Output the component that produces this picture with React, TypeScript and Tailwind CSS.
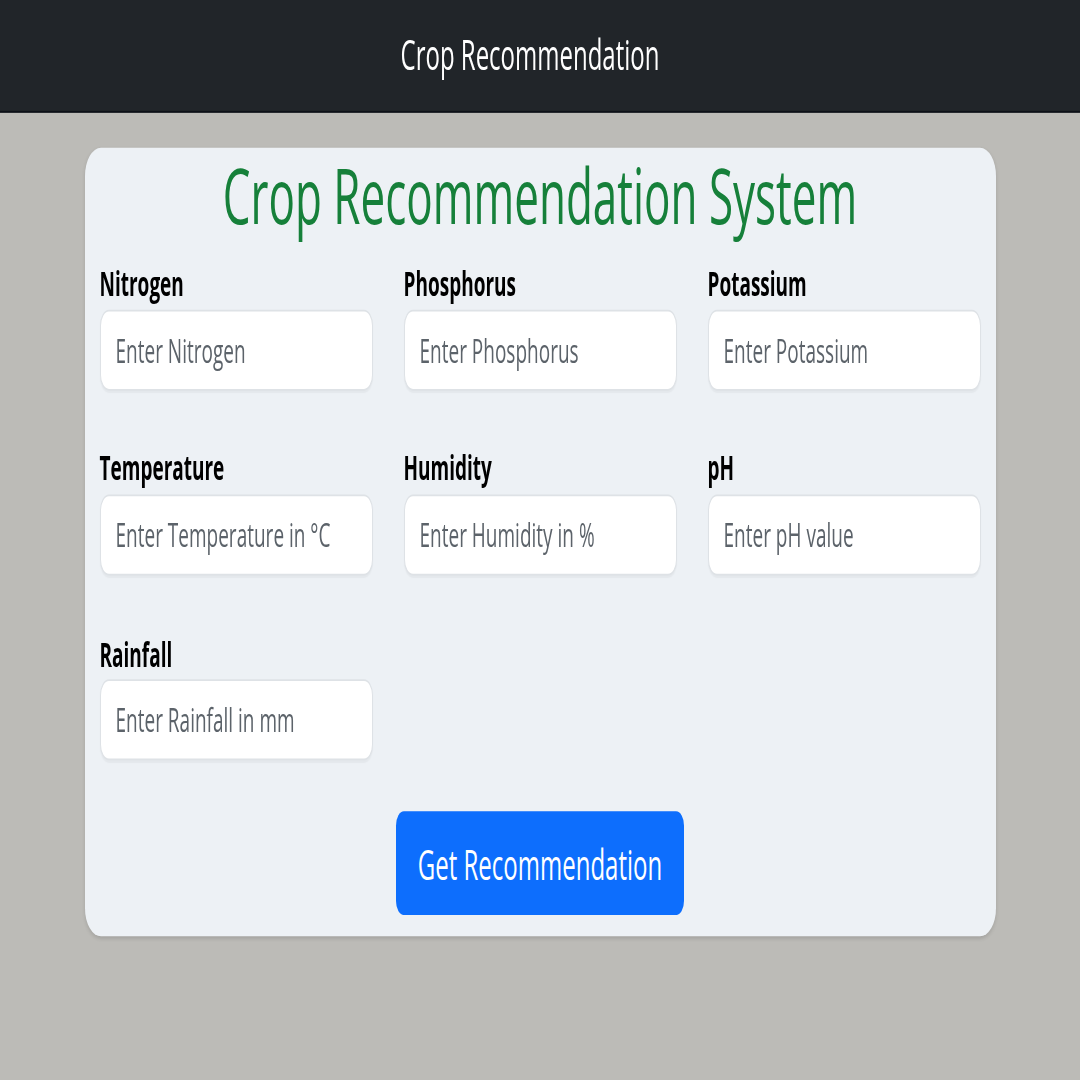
import type { ReactNode } from 'react'

const fields = [
  { label: 'Nitrogen', placeholder: 'Enter Nitrogen' },
  { label: 'Phosphorus', placeholder: 'Enter Phosphorus' },
  { label: 'Potassium', placeholder: 'Enter Potassium' },
  { label: 'Temperature', placeholder: 'Enter Temperature in °C' },
  { label: 'Humidity', placeholder: 'Enter Humidity in %' },
  { label: 'pH', placeholder: 'Enter pH value' },
  { label: 'Rainfall', placeholder: 'Enter Rainfall in mm' },
]

function Field({ label, placeholder }: { label: string; placeholder: string }) {
  return (
    <div className="flex flex-col">
      <label className="mt-[1.5px] mb-[3px] text-[19px] font-bold leading-[1.2] text-black">{label}</label>
      <input
        type="text"
        placeholder={placeholder}
        className="h-[45.5px] w-full rounded-[9px] border border-[#dee2e6] bg-white px-[15px] text-[19px] leading-[1.5] text-[#212529] shadow-[0_1px_1px_rgba(0,0,0,0.04)] outline-none placeholder:text-[#5c636a]"
      />
    </div>
  )
}

function Shell({ children }: { children: ReactNode }) {
  // the screenshot is stretched vertically, so the whole page is scaled on y
  return (
    <div className="min-h-screen overflow-hidden bg-[#bcbbb7] font-['Open_Sans',sans-serif]">
      <div className="origin-top scale-y-[1.76]">{children}</div>
    </div>
  )
}

export default function App() {
  return (
    <Shell>
      <nav className="border-b border-[#0d1017] bg-[#212529] pt-[13px] pb-[14px]">
        <p className="pr-[20px] text-center text-[24px] leading-[36px] text-white">Crop Recommendation</p>
      </nav>

      <main className="mx-auto mt-[20.1px] w-[911px] rounded-2xl bg-[#edf1f5] px-[15px] pb-[11.9px] shadow-[0_1px_3px_rgba(0,0,0,0.12)]">
        <h1 className="mb-[12px] text-center text-[44px] leading-[1.2] text-[#16803a]">
          Crop Recommendation System
        </h1>

        <form className="flex flex-col" onSubmit={(e) => e.preventDefault()}>
          <div className="grid grid-cols-3 gap-x-[31px] gap-y-[32.3px]">
            {fields.map((f) => (
              <Field key={f.label} label={f.label} placeholder={f.placeholder} />
            ))}
          </div>

          <div className="mt-[29.5px] flex justify-center">
            <button
              type="submit"
              className="h-[58.5px] rounded-lg bg-[#0d6efd] px-[21.5px] text-[24px] leading-[36px] text-white"
            >
              Get Recommendation
            </button>
          </div>
        </form>
      </main>
    </Shell>
  )
}
